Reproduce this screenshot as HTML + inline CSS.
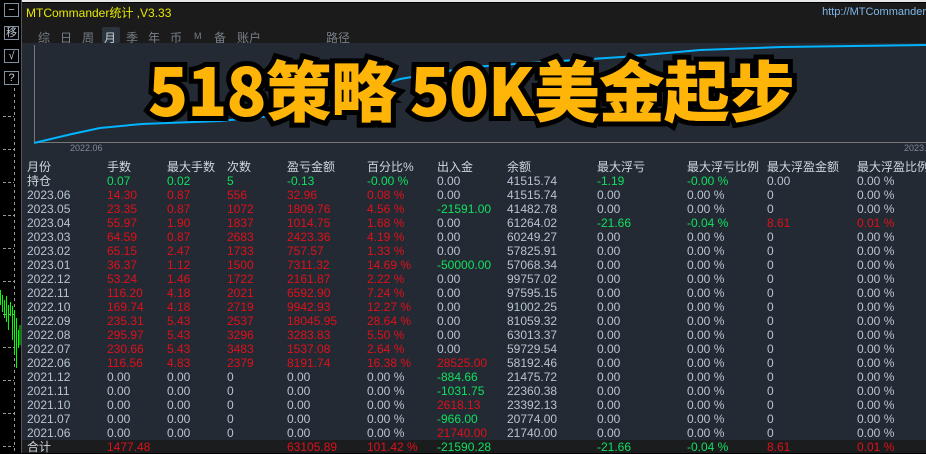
<!DOCTYPE html>
<html><head><meta charset="utf-8"><style>
*{margin:0;padding:0;box-sizing:border-box}
body{width:926px;height:453px;background:#000;overflow:hidden;position:relative;font-family:"Liberation Sans","Noto Sans CJK SC",sans-serif;font-size:12px}
.abs{position:absolute}
.btn{position:absolute;left:4px;width:15px;height:14px;border:1px solid #8090a0;color:#c0c8d0;font-size:11px;line-height:12px;text-align:center;background:#000}
.top{position:absolute;left:22px;top:3px;width:904px;height:40px;background:#1b1b1b}
.panel{position:absolute;left:22px;top:43px;width:904px;height:410px;background:#232a33}
.tab{position:absolute;top:26px;color:#777f88;font-size:12px}
.r{position:absolute;left:0;width:904px;height:14px;line-height:14px;white-space:nowrap}
.r span{position:absolute;top:0}
.g{color:#b8c4d4}.R{color:#e0101a}.G{color:#10e060}.W{color:#d0d6de}
.banner{position:absolute;left:148px;top:46px;font-family:"Noto Sans CJK SC",sans-serif;font-weight:900;font-size:66px;line-height:84px;color:#ffb508;-webkit-text-stroke:10px #000;paint-order:stroke fill;white-space:nowrap;letter-spacing:-1px}
</style></head><body>
<div class="abs" style="left:0;top:0;width:926px;height:3px;background:#000"></div>
<div class="abs" style="left:22px;top:0;width:904px;height:2px;background:#e8e8e8"></div>
<div class="abs" style="left:21px;top:0;width:1px;height:453px;background:#555"></div>
<div class="btn" style="top:3px">−</div>
<div class="btn" style="top:26px">移</div>
<div class="btn" style="top:49px">√</div>
<div class="btn" style="top:71px">?</div>
<svg class="abs" style="left:0;top:0" width="21" height="453">
<line x1="14.5" y1="88" x2="14.5" y2="453" stroke="#999" stroke-dasharray="3,3"/>
<g stroke="#999" stroke-dasharray="3,2">
<line x1="3" y1="116.5" x2="14" y2="116.5"/><line x1="3" y1="149.5" x2="14" y2="149.5"/><line x1="3" y1="182.5" x2="14" y2="182.5"/><line x1="3" y1="215.5" x2="14" y2="215.5"/><line x1="3" y1="248.5" x2="14" y2="248.5"/><line x1="3" y1="281.5" x2="14" y2="281.5"/><line x1="3" y1="314.5" x2="14" y2="314.5"/><line x1="3" y1="347.5" x2="14" y2="347.5"/><line x1="3" y1="380.5" x2="14" y2="380.5"/><line x1="3" y1="413.5" x2="14" y2="413.5"/><line x1="3" y1="446.5" x2="14" y2="446.5"/></g>
<g stroke="#00ff00" stroke-width="1">
<line x1="0.5" y1="290" x2="0.5" y2="305"/><line x1="2.5" y1="295" x2="2.5" y2="312"/><line x1="4.5" y1="300" x2="4.5" y2="318"/><line x1="6.5" y1="296" x2="6.5" y2="322"/><line x1="8.5" y1="305" x2="8.5" y2="330"/><line x1="10.5" y1="302" x2="10.5" y2="316"/><line x1="12.5" y1="306" x2="12.5" y2="340"/><line x1="14.5" y1="310" x2="14.5" y2="355"/><line x1="16.5" y1="318" x2="16.5" y2="368"/><line x1="18.5" y1="330" x2="18.5" y2="348"/><line x1="20" y1="325" x2="20" y2="345"/></g>
</svg>
<div class="top">
<div class="abs" style="left:4px;top:1px;color:#e8e800;font-size:12px">MTCommander统计 ,V3.33</div>
<div class="abs" style="right:0;top:3px;color:#7fb8e8;font-size:11px">http://MTCommander</div>
<div class="tab" style="left:16px">综</div><div class="tab" style="left:38px">日</div><div class="tab" style="left:60px">周</div>
<div class="abs" style="left:80px;top:24px;width:18px;height:16px;background:#2b333d;border-radius:2px"></div>
<div class="tab" style="left:82px;color:#c8d0d8">月</div><div class="tab" style="left:104px">季</div><div class="tab" style="left:126px">年</div><div class="tab" style="left:148px">币</div><div class="tab" style="left:172px;font-size:9px;top:28px">M</div><div class="tab" style="left:192px">备</div><div class="tab" style="left:215px">账户</div><div class="tab" style="left:304px">路径</div>
</div>
<div class="panel">
<svg class="abs" style="left:0;top:0" width="904" height="110">
<line x1="12.5" y1="2" x2="12.5" y2="100" stroke="#777"/>
<line x1="12" y1="99.5" x2="904" y2="99.5" stroke="#777"/>
<polyline fill="none" stroke="#00b4ff" stroke-width="2" points="12,100 50,91 78,85 120,81 198,78 260,72 330,52 378,36 450,24 553,17 600,14 678,7 760,4 904,2"/>
</svg>
<div class="abs" style="left:48px;top:100px;color:#7f8a96;font-size:9px">2022.06</div>
<div class="abs" style="left:882px;top:100px;color:#7f8a96;font-size:9px">2023.0</div>
</div>
<div class="banner">518策略 50K美金起步</div>
<div class="abs" style="left:22px;top:440px;width:904px;height:13px;background:#1a1c1e"></div>
<div id="t" class="abs" style="left:0;top:0"></div>
<script>
var X=[27,107,167,227,287,367,437,507,597,687,767,857];
var rows=[
["W","月份","W","手数","W","最大手数","W","次数","W","盈亏金额","W","百分比%","W","出入金","W","余额","W","最大浮亏","W","最大浮亏比例","W","最大浮盈金额","W","最大浮盈比例"],
["W","持仓","G","0.07","G","0.02","G","5","G","-0.13","G","-0.00 %","g","0.00","g","41515.74","G","-1.19","G","-0.00 %","g","0.00","g","0.00 %"]];
var d=[["2023.06","14.30","0.87","556","32.96","0.08 %","0.00","41515.74","0.00","0.00 %","0","0.00 %"],
["2023.05","23.35","0.87","1072","1809.76","4.56 %","-21591.00","41482.78","0.00","0.00 %","0","0.00 %"],
["2023.04","55.97","1.90","1837","1014.75","1.68 %","0.00","61264.02","-21.66","-0.04 %","8.61","0.01 %"],
["2023.03","64.59","0.87","2683","2423.36","4.19 %","0.00","60249.27","0.00","0.00 %","0","0.00 %"],
["2023.02","65.15","2.47","1733","757.57","1.33 %","0.00","57825.91","0.00","0.00 %","0","0.00 %"],
["2023.01","36.37","1.12","1500","7311.32","14.69 %","-50000.00","57068.34","0.00","0.00 %","0","0.00 %"],
["2022.12","53.24","1.46","1722","2161.87","2.22 %","0.00","99757.02","0.00","0.00 %","0","0.00 %"],
["2022.11","116.20","4.18","2021","6592.90","7.24 %","0.00","97595.15","0.00","0.00 %","0","0.00 %"],
["2022.10","169.74","4.18","2719","9942.93","12.27 %","0.00","91002.25","0.00","0.00 %","0","0.00 %"],
["2022.09","235.31","5.43","2537","18045.95","28.64 %","0.00","81059.32","0.00","0.00 %","0","0.00 %"],
["2022.08","295.97","5.43","3296","3283.83","5.50 %","0.00","63013.37","0.00","0.00 %","0","0.00 %"],
["2022.07","230.66","5.43","3483","1537.08","2.64 %","0.00","59729.54","0.00","0.00 %","0","0.00 %"],
["2022.06","116.56","4.83","2379","8191.74","16.38 %","28525.00","58192.46","0.00","0.00 %","0","0.00 %"],
["2021.12","0.00","0.00","0","0.00","0.00 %","-884.66","21475.72","0.00","0.00 %","0","0.00 %"],
["2021.11","0.00","0.00","0","0.00","0.00 %","-1031.75","22360.38","0.00","0.00 %","0","0.00 %"],
["2021.10","0.00","0.00","0","0.00","0.00 %","2618.13","23392.13","0.00","0.00 %","0","0.00 %"],
["2021.07","0.00","0.00","0","0.00","0.00 %","-966.00","20774.00","0.00","0.00 %","0","0.00 %"],
["2021.06","0.00","0.00","0","0.00","0.00 %","21740.00","21740.00","0.00","0.00 %","0","0.00 %"]];
d.forEach(function(a){var red=a[1]!="0.00";var o=[];a.forEach(function(v,i){var c="g";if(i>=1&&i<=5)c=red?"R":"g";if(i==6)c=v=="0.00"?"g":(v[0]=="-"?"G":"R");if(i==8&&v!="0.00")c="G";if(i==9&&v[0]=="-")c="G";if(i>=10&&v!="0"&&v!="0.00 %")c="R";o.push(c,v)});rows.push(o)});
rows.push(["W","合计","R","1477.48","W","","W","","R","63105.89","R","101.42 %","G","-21590.28","g","","G","-21.66","G","-0.04 %","R","8.61","R","0.01 %"]);
var h="";rows.forEach(function(r,k){var y=160+k*14;if(k==rows.length-1)y=440;h+='<div class="r" style="top:'+y+'px;left:0;width:926px">';for(var i=0;i<12;i++)h+='<span class="'+r[2*i]+'" style="left:'+X[i]+'px">'+r[2*i+1]+'</span>';h+='</div>'});
document.getElementById('t').innerHTML=h;
</script>
</body></html>
